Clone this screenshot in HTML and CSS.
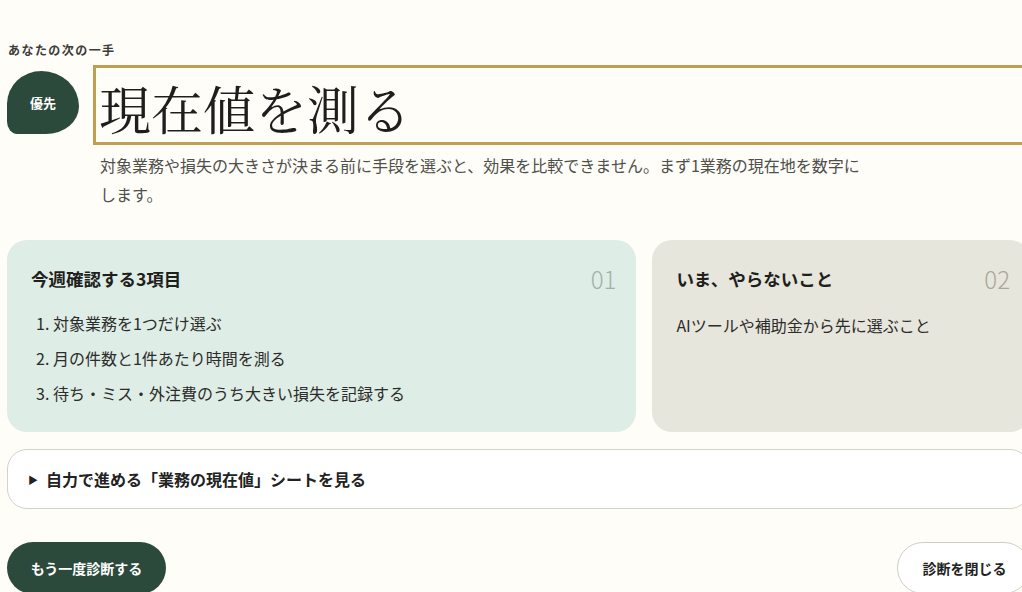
FILE: index.html
```html
<!DOCTYPE html>
<html lang="ja">
<head>
<meta charset="utf-8">
<link rel="stylesheet" href="styles.css">
</head>
<body>
<main class="page">
  <p class="eyebrow">あなたの次の一手</p>
  <div class="hero">
    <div class="badge">優先</div>
    <h1 class="title">現在値を測る</h1>
  </div>
  <p class="desc">対象業務や損失の大きさが決まる前に手段を選ぶと、効果を比較できません。まず1業務の現在地を数字にします。</p>
  <div class="cards">
    <section class="card card-do">
      <div class="card-head">
        <h2>今週確認する3項目</h2>
        <span class="num">01</span>
      </div>
      <ol class="steps">
        <li>1. 対象業務を1つだけ選ぶ</li>
        <li>2. 月の件数と1件あたり時間を測る</li>
        <li>3. 待ち・ミス・外注費のうち大きい損失を記録する</li>
      </ol>
    </section>
    <section class="card card-dont">
      <div class="card-head">
        <h2>いま、やらないこと</h2>
        <span class="num">02</span>
      </div>
      <p class="dont-text">AIツールや補助金から先に選ぶこと</p>
    </section>
  </div>
  <details class="sheet">
    <summary>自力で進める「業務の現在値」シートを見る</summary>
  </details>
  <div class="actions">
    <button class="btn btn-primary">もう一度診断する</button>
    <button class="btn btn-ghost">診断を閉じる</button>
  </div>
</main>
</body>
</html>
```
FILE: styles.css
```css
html, body {
  margin: 0;
  padding: 0;
  background: #fefdf8;
  overflow: hidden;
}
body {
  font-family: "Noto Sans CJK JP", "Noto Sans", sans-serif;
  color: #222;
}
.page {
  width: 1023px;
  margin-left: 7px;
  padding-top: 42px;
}
.eyebrow {
  margin: 0 0 7px 1px;
  font-size: 12px;
  font-weight: 700;
  letter-spacing: 0.12em;
  color: #3b3b37;
  line-height: 16px;
}
.hero {
  display: flex;
  align-items: flex-start;
  gap: 14px;
}
.badge {
  flex: none;
  width: 72px;
  height: 63px;
  margin-top: 6px;
  background: #2b4a3c;
  color: #fff;
  font-size: 13px;
  font-weight: 700;
  display: flex;
  align-items: center;
  justify-content: center;
  border-radius: 48% 52% 46% 14% / 52% 56% 44% 20%;
}
.title {
  flex: 1;
  margin: 0;
  border: 3px solid #c29e52;
  height: 71px;
  padding-top: 3px;
  line-height: 74px;
  padding-left: 3px;
  overflow: hidden;
  font-family: "Noto Serif CJK JP", "Noto Serif JP", "IPAMincho", "Liberation Serif", serif;
  font-weight: 400;
  font-size: 52px;
  color: #1e1e1c;
}
.desc {
  margin: 6px 0 0 93px;
  max-width: 766px;
  font-size: 16px;
  line-height: 29px;
  color: #4f4f4b;
}
.cards {
  display: grid;
  grid-template-columns: 5fr 3fr;
  gap: 16px;
  margin-top: 31px;
}
.card {
  border-radius: 20px;
  height: 192px;
  box-sizing: border-box;
  padding: 23px 20px 0 24px;
}
.card-do { background: #deede5; }
.card-dont { background: #e7e6dc; }
.card-head {
  display: flex;
  justify-content: space-between;
  align-items: center;
  height: 30px;
}
.card-head h2 {
  margin: 0;
  font-size: 17.5px;
  font-weight: 700;
  color: #1f1f1d;
}
.num {
  font-size: 24px;
  font-weight: 300;
  color: #a1b2a9;
}
.card-dont .num { color: #a9a89e; }
.steps {
  list-style: none;
  margin: 13px 0 0 5px;
  padding: 0;
  font-size: 16px;
  line-height: 35px;
  color: #2c2c2a;
}
.dont-text {
  margin: 20px 0 0;
  font-size: 16px;
  line-height: 24px;
  color: #2c2c2a;
}
.sheet {
  margin-top: 17px;
  background: #fff;
  border: 1px solid #d3d2c9;
  border-radius: 20px;
  height: 60px;
  box-sizing: border-box;
}
.sheet summary {
  display: block;
  padding: 0 0 0 20px;
  line-height: 58px;
  font-size: 16px;
  font-weight: 700;
  color: #222;
  cursor: pointer;
  list-style: none;
}
.sheet summary::before {
  content: "▶";
  font-size: 10px;
  margin-right: 8px;
  vertical-align: 2px;
}
.actions {
  display: flex;
  justify-content: space-between;
  margin-top: 33px;
}
.btn {
  font-family: inherit;
  font-size: 14px;
  font-weight: 700;
  height: 52px;
  border-radius: 26px;
  padding: 0 22px;
  cursor: pointer;
}
.btn-primary {
  background: #2b4a3c;
  color: #fff;
  border: none;
  width: 159px;
}
.btn-ghost {
  background: #fff;
  color: #222;
  border: 1px solid #cfcec6;
  width: 133px;
  padding-left: 24px;
}
```
